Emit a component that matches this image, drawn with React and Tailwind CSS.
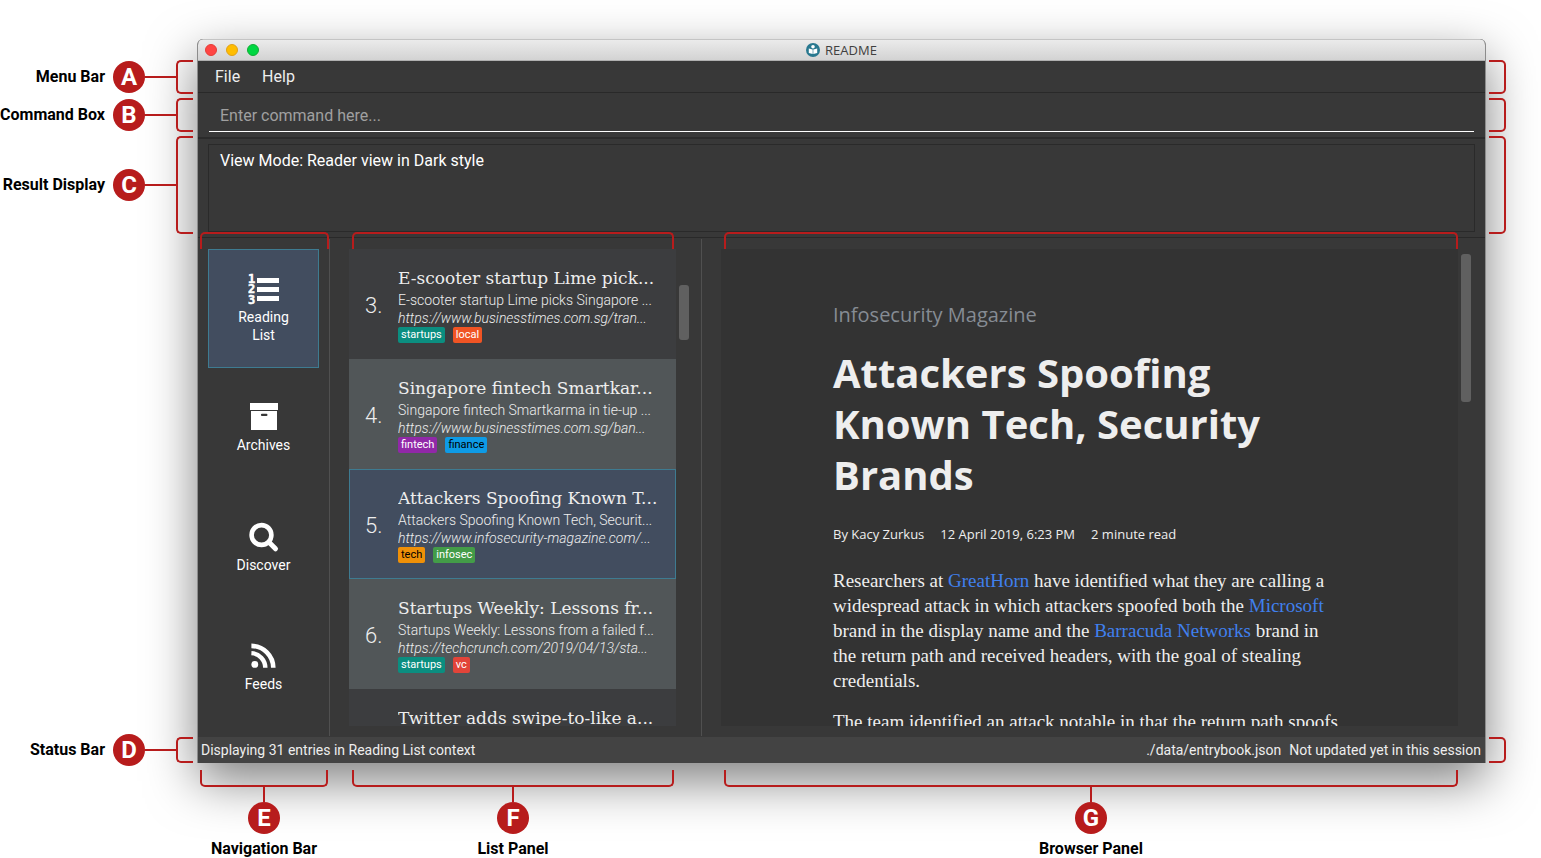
import React from "react";

const ROBOTO = "font-['Roboto','Liberation_Sans',sans-serif]";

function Badge({ letter }) {
  return (
    <span className="flex size-8 shrink-0 items-center justify-center rounded-full bg-[#b71c1c] text-2xl font-bold leading-none text-white">
      {letter}
    </span>
  );
}

function SideLabel({ letter, text, className }) {
  return (
    <div className={`flex items-center justify-end ${className}`}>
      <span className="whitespace-nowrap text-base font-bold leading-5 text-black">{text}</span>
      <span className="ml-2 flex">
        <Badge letter={letter} />
      </span>
      <span className="h-[2px] w-[31px] bg-[#b71c1c]" />
      <span className="mr-1 h-full w-[17px] rounded-l-[5px] border-2 border-r-0 border-[#b71c1c]" />
    </div>
  );
}

function RightBracket({ className }) {
  return <div className={`w-[17px] rounded-r-[5px] border-2 border-l-0 border-[#b71c1c] ${className}`} />;
}

function BottomLabel({ letter, text, className }) {
  return (
    <div className={`flex flex-col items-center ${className}`}>
      <span className="h-[17px] w-full rounded-b-[5px] border-2 border-t-0 border-[#b71c1c]" />
      <span className="h-[15px] w-[2px] bg-[#b71c1c]" />
      <Badge letter={letter} />
      <span className="mt-[5px] whitespace-nowrap text-base font-bold leading-5 text-black">{text}</span>
    </div>
  );
}

function TopBracket({ className }) {
  return (
    <span
      className={`pointer-events-none absolute -top-[7px] h-[17px] rounded-t-[5px] border-2 border-b-0 border-[#b71c1c] ${className}`}
    />
  );
}

function ListIcon() {
  return (
    <svg width="32" height="32" viewBox="0 0 32 32" fill="#fff" aria-hidden="true">
      <g fontFamily="'DejaVu Sans Mono', monospace" fontWeight="700" fontSize="12" stroke="#fff" strokeWidth="0.5">
        <text x="0" y="10">1</text>
        <text x="0" y="20">2</text>
        <text x="0" y="31">3</text>
      </g>
      <rect x="9" y="5" width="22" height="5" />
      <rect x="9" y="14" width="22" height="5" />
      <rect x="9" y="23" width="22" height="5" />
    </svg>
  );
}

function ArchiveIcon() {
  return (
    <svg width="32" height="32" viewBox="0 0 32 32" fill="#fff" aria-hidden="true">
      <rect x="2" y="2" width="28" height="7" />
      <path
        fillRule="evenodd"
        d="M3 10h26v19H3zM14 12.8a1 1 0 0 0 0 2.2h4.4a1 1 0 0 0 0-2.2z"
      />
    </svg>
  );
}

function SearchIcon() {
  return (
    <svg width="32" height="32" viewBox="0 0 32 32" fill="none" stroke="#fff" aria-hidden="true">
      <circle cx="13.5" cy="14" r="9.9" strokeWidth="4.6" />
      <path d="M21.5 21.8l6 6" strokeWidth="5" strokeLinecap="round" />
    </svg>
  );
}

function FeedIcon() {
  return (
    <svg width="32" height="32" viewBox="0 0 32 32" fill="none" stroke="#fff" aria-hidden="true">
      <circle cx="6.8" cy="24.4" r="3.4" fill="#fff" stroke="none" />
      <path d="M3.4 13.1a14.7 14.7 0 0 1 13.9 14.7" strokeWidth="4.4" />
      <path d="M3.4 5.9a22 22 0 0 1 21.9 21.9" strokeWidth="4.6" />
    </svg>
  );
}

function AppIcon() {
  return (
    <svg width="14" height="14" viewBox="0 0 14 14" aria-hidden="true">
      <circle cx="7" cy="7" r="7" fill="#28788f" />
      <circle cx="7" cy="3.7" r="1.8" fill="#fff" />
      <path d="M2.8 5.4L6.7 6.6v4.4l-3.9-.9zM11.2 5.4L7.3 6.6v4.4l3.9-.9z" fill="#fff" />
    </svg>
  );
}

const navItems = [
  { label: "Reading List", Icon: ListIcon, active: true },
  { label: "Archives", Icon: ArchiveIcon },
  { label: "Discover", Icon: SearchIcon },
  { label: "Feeds", Icon: FeedIcon },
];

const entries = [
  {
    id: 3,
    title: "E-scooter startup Lime pick...",
    summary: "E-scooter startup Lime picks Singapore ...",
    url: "https://www.businesstimes.com.sg/tran...",
    tags: [
      { name: "startups", style: "bg-[#0b8e80] text-white" },
      { name: "local", style: "bg-[#f05424] text-white" },
    ],
    style: "bg-[#3c3d3f] border-[#3c3d3f]",
  },
  {
    id: 4,
    title: "Singapore fintech Smartkar...",
    summary: "Singapore fintech Smartkarma in tie-up ...",
    url: "https://www.businesstimes.com.sg/ban...",
    tags: [
      { name: "fintech", style: "bg-[#9128a8] text-white" },
      { name: "finance", style: "bg-[#0e9be6] text-black" },
    ],
    style: "bg-[#515658] border-[#515658]",
  },
  {
    id: 5,
    title: "Attackers Spoofing Known T...",
    summary: "Attackers Spoofing Known Tech, Securit...",
    url: "https://www.infosecurity-magazine.com/...",
    tags: [
      { name: "tech", style: "bg-[#ef9008] text-black" },
      { name: "infosec", style: "bg-[#439c48] text-white" },
    ],
    style: "bg-[#424d5f] border-[#3e7b91]",
  },
  {
    id: 6,
    title: "Startups Weekly: Lessons fr...",
    summary: "Startups Weekly: Lessons from a failed f...",
    url: "https://techcrunch.com/2019/04/13/sta...",
    tags: [
      { name: "startups", style: "bg-[#0b8e80] text-white" },
      { name: "vc", style: "bg-[#e24439] text-white" },
    ],
    style: "bg-[#515658] border-[#515658]",
  },
  {
    id: 7,
    title: "Twitter adds swipe-to-like a...",
    summary: "",
    url: "",
    tags: [],
    style: "bg-[#3c3d3f] border-[#3c3d3f]",
  },
];

function Entry({ entry }) {
  return (
    <li className={`flex h-[110px] shrink-0 items-start border pt-[15px] text-[#eee] ${entry.style}`}>
      <span className="w-12 shrink-0 pl-[15px] pt-7 text-[22px] font-light leading-[26px]">
        {entry.summary && `${entry.id}.`}
      </span>
      <div className="min-w-0 flex-1 overflow-hidden whitespace-nowrap">
        <h3 className="font-['Roboto_Slab','DejaVu_Serif',serif] text-[17px] leading-[26px]">{entry.title}</h3>
        <p className="text-sm font-light leading-[18px]">{entry.summary}</p>
        <p className="text-sm font-light italic leading-[18px]">{entry.url}</p>
        <div className="flex gap-2">
          {entry.tags.map((tag) => (
            <span key={tag.name} className={`rounded-xs px-[3px] text-[11px] leading-4 ${tag.style}`}>
              {tag.name}
            </span>
          ))}
        </div>
      </div>
    </li>
  );
}

function ReaderLink({ children }) {
  return (
    <a href="#" className="text-[#4080ee]">
      {children}
    </a>
  );
}

export default function App() {
  return (
    <div className={`min-h-screen overflow-hidden bg-white pt-[39px] ${ROBOTO}`}>
      <div className="flex">
        <aside className="relative z-10 flex w-[197px] shrink-0 flex-col gap-1 pt-[21px]">
          <SideLabel letter="A" text="Menu Bar" className="h-[34px]" />
          <SideLabel letter="B" text="Command Box" className="h-[34px]" />
          <SideLabel letter="C" text="Result Display" className="h-[98px]" />
          <SideLabel letter="D" text="Status Bar" className="mt-auto h-[26px]" />
        </aside>

        <main className="flex min-w-0 flex-1 flex-col overflow-hidden rounded-t-md border-x border-[#8c8c8c] bg-[#383838] shadow-[0_18px_50px_rgba(0,0,0,0.5)]">
          <header className="flex h-[22px] items-center border-b border-t border-b-[#b0b0b0] border-t-[#c4c4c4] bg-linear-to-b from-[#ebebeb] to-[#d3d3d3] px-[7px]">
            <div className="flex flex-1 gap-[9px]">
              <span className="size-3 rounded-full border border-[#e33e38] bg-[#ff4543]" />
              <span className="size-3 rounded-full border border-[#e1a116] bg-[#ffbd00]" />
              <span className="size-3 rounded-full border border-[#12ac35] bg-[#00d742]" />
            </div>
            <div className="flex items-center gap-[5px]">
              <AppIcon />
              <span className="font-['Open_Sans',sans-serif] text-[13px] leading-5 text-[#404040]">README</span>
            </div>
            <div className="flex-1" />
          </header>

          <nav className="flex h-8 items-center gap-[22px] border-b border-[#292929] px-[17px] text-base text-[#eee]">
            <button type="button">File</button>
            <button type="button">Help</button>
          </nav>

          <div className="flex h-[46px] flex-col border-b-2 border-[#2b2b2b] px-[11px] pb-[5px] pt-2">
            <input
              aria-label="Command"
              placeholder="Enter command here..."
              className="w-full flex-1 border-b border-white bg-transparent px-[11px] text-base text-white placeholder:text-[#a0a0a0] focus:outline-none"
            />
          </div>

          <section className="border-b border-[#292929] px-[10px] pb-[5px] pt-[5px]">
            <p className="h-[88px] border border-[#2a2a2a] px-[11px] pt-[6px] text-base leading-5 text-white">
              View Mode: Reader view in Dark style
            </p>
          </section>

          <div className="flex h-[499px]">
            <nav className="relative my-px flex w-[132px] shrink-0 flex-col border-r border-[#505050] px-[10px] py-[10px]">
              <TopBracket className="left-[2px] right-0" />
              {navItems.map(({ label, Icon, active }) => (
                <button
                  key={label}
                  type="button"
                  className={`flex flex-1 flex-col items-center justify-center border px-6 text-sm leading-[18px] text-white ${
                    active ? "border-[#3e7b91] bg-[#424d5f]" : "border-transparent"
                  }`}
                >
                  <Icon />
                  <span className="pt-[3px]">{label}</span>
                </button>
              ))}
            </nav>

            <section className="relative my-px flex w-[372px] shrink-0 border-r border-[#505050] py-[10px] pl-[19px]">
              <TopBracket className="left-[22px] w-[322px]" />
              <ul className="flex h-[477px] w-[327px] flex-col overflow-hidden">
                {entries.map((entry) => (
                  <Entry key={entry.id} entry={entry} />
                ))}
              </ul>
              <div className="ml-[3px] pt-9">
                <div className="h-[55px] w-[10px] rounded-[3px] bg-[#606060]" />
              </div>
            </section>

            <section className="relative my-px flex min-w-0 flex-1 py-[10px] pl-[19px] pr-[14px]">
              <TopBracket className="left-[22px] right-[27px]" />
              <article className="h-[477px] min-w-0 flex-1 overflow-hidden bg-[#333] px-28 pt-[52px] text-[#eee]">
                <p className="font-['Open_Sans',sans-serif] text-xl leading-7 text-[#868c94]">Infosecurity Magazine</p>
                <h1 className="mt-[18px] whitespace-nowrap font-['Open_Sans',sans-serif] text-[40px] font-bold leading-[51px]">
                  Attackers Spoofing
                  <br />
                  Known Tech, Security
                  <br />
                  Brands
                </h1>
                <p className="mt-6 flex gap-4 whitespace-nowrap font-['Open_Sans',sans-serif] text-[13px] leading-5">
                  <span>By Kacy Zurkus</span>
                  <span>12 April 2019, 6:23 PM</span>
                  <span>2 minute read</span>
                </p>
                <div className="whitespace-nowrap pt-6 font-['Georgia','Liberation_Serif',serif] text-[19px] leading-[25px]">
                  <p>
                    Researchers at <ReaderLink>GreatHorn</ReaderLink> have identified what they are calling a
                    <br />
                    widespread attack in which attackers spoofed both the <ReaderLink>Microsoft</ReaderLink>
                    <br />
                    brand in the display name and the <ReaderLink>Barracuda Networks</ReaderLink> brand in
                    <br />
                    the return path and received headers, with the goal of stealing
                    <br />
                    credentials.
                  </p>
                  <p className="mt-4">The team identified an attack notable in that the return path spoofs</p>
                </div>
              </article>
              <div className="ml-[3px] pt-[5px]">
                <div className="h-[148px] w-[10px] rounded-[3px] bg-[#606060]" />
              </div>
            </section>
          </div>

          <footer className="flex h-[26px] items-center justify-between bg-[#434343] pl-[3px] pr-1 text-sm text-[#eee]">
            <span>Displaying 31 entries in Reading List context</span>
            <span className="flex gap-2">
              <span>./data/entrybook.json</span>
              <span>Not updated yet in this session</span>
            </span>
          </footer>
        </main>

        <aside className="relative z-10 flex w-[55px] shrink-0 flex-col gap-1 pl-[3px] pt-[21px]">
          <RightBracket className="h-[34px]" />
          <RightBracket className="h-[34px]" />
          <RightBracket className="h-[98px]" />
          <RightBracket className="mt-auto h-[26px]" />
        </aside>
      </div>

      <div className="relative z-10 flex pl-[200px] pr-[83px] pt-[7px]">
        <BottomLabel letter="E" text="Navigation Bar" className="w-32" />
        <BottomLabel letter="F" text="List Panel" className="ml-6 w-[322px]" />
        <BottomLabel letter="G" text="Browser Panel" className="ml-[50px] min-w-0 flex-1" />
      </div>
    </div>
  );
}
